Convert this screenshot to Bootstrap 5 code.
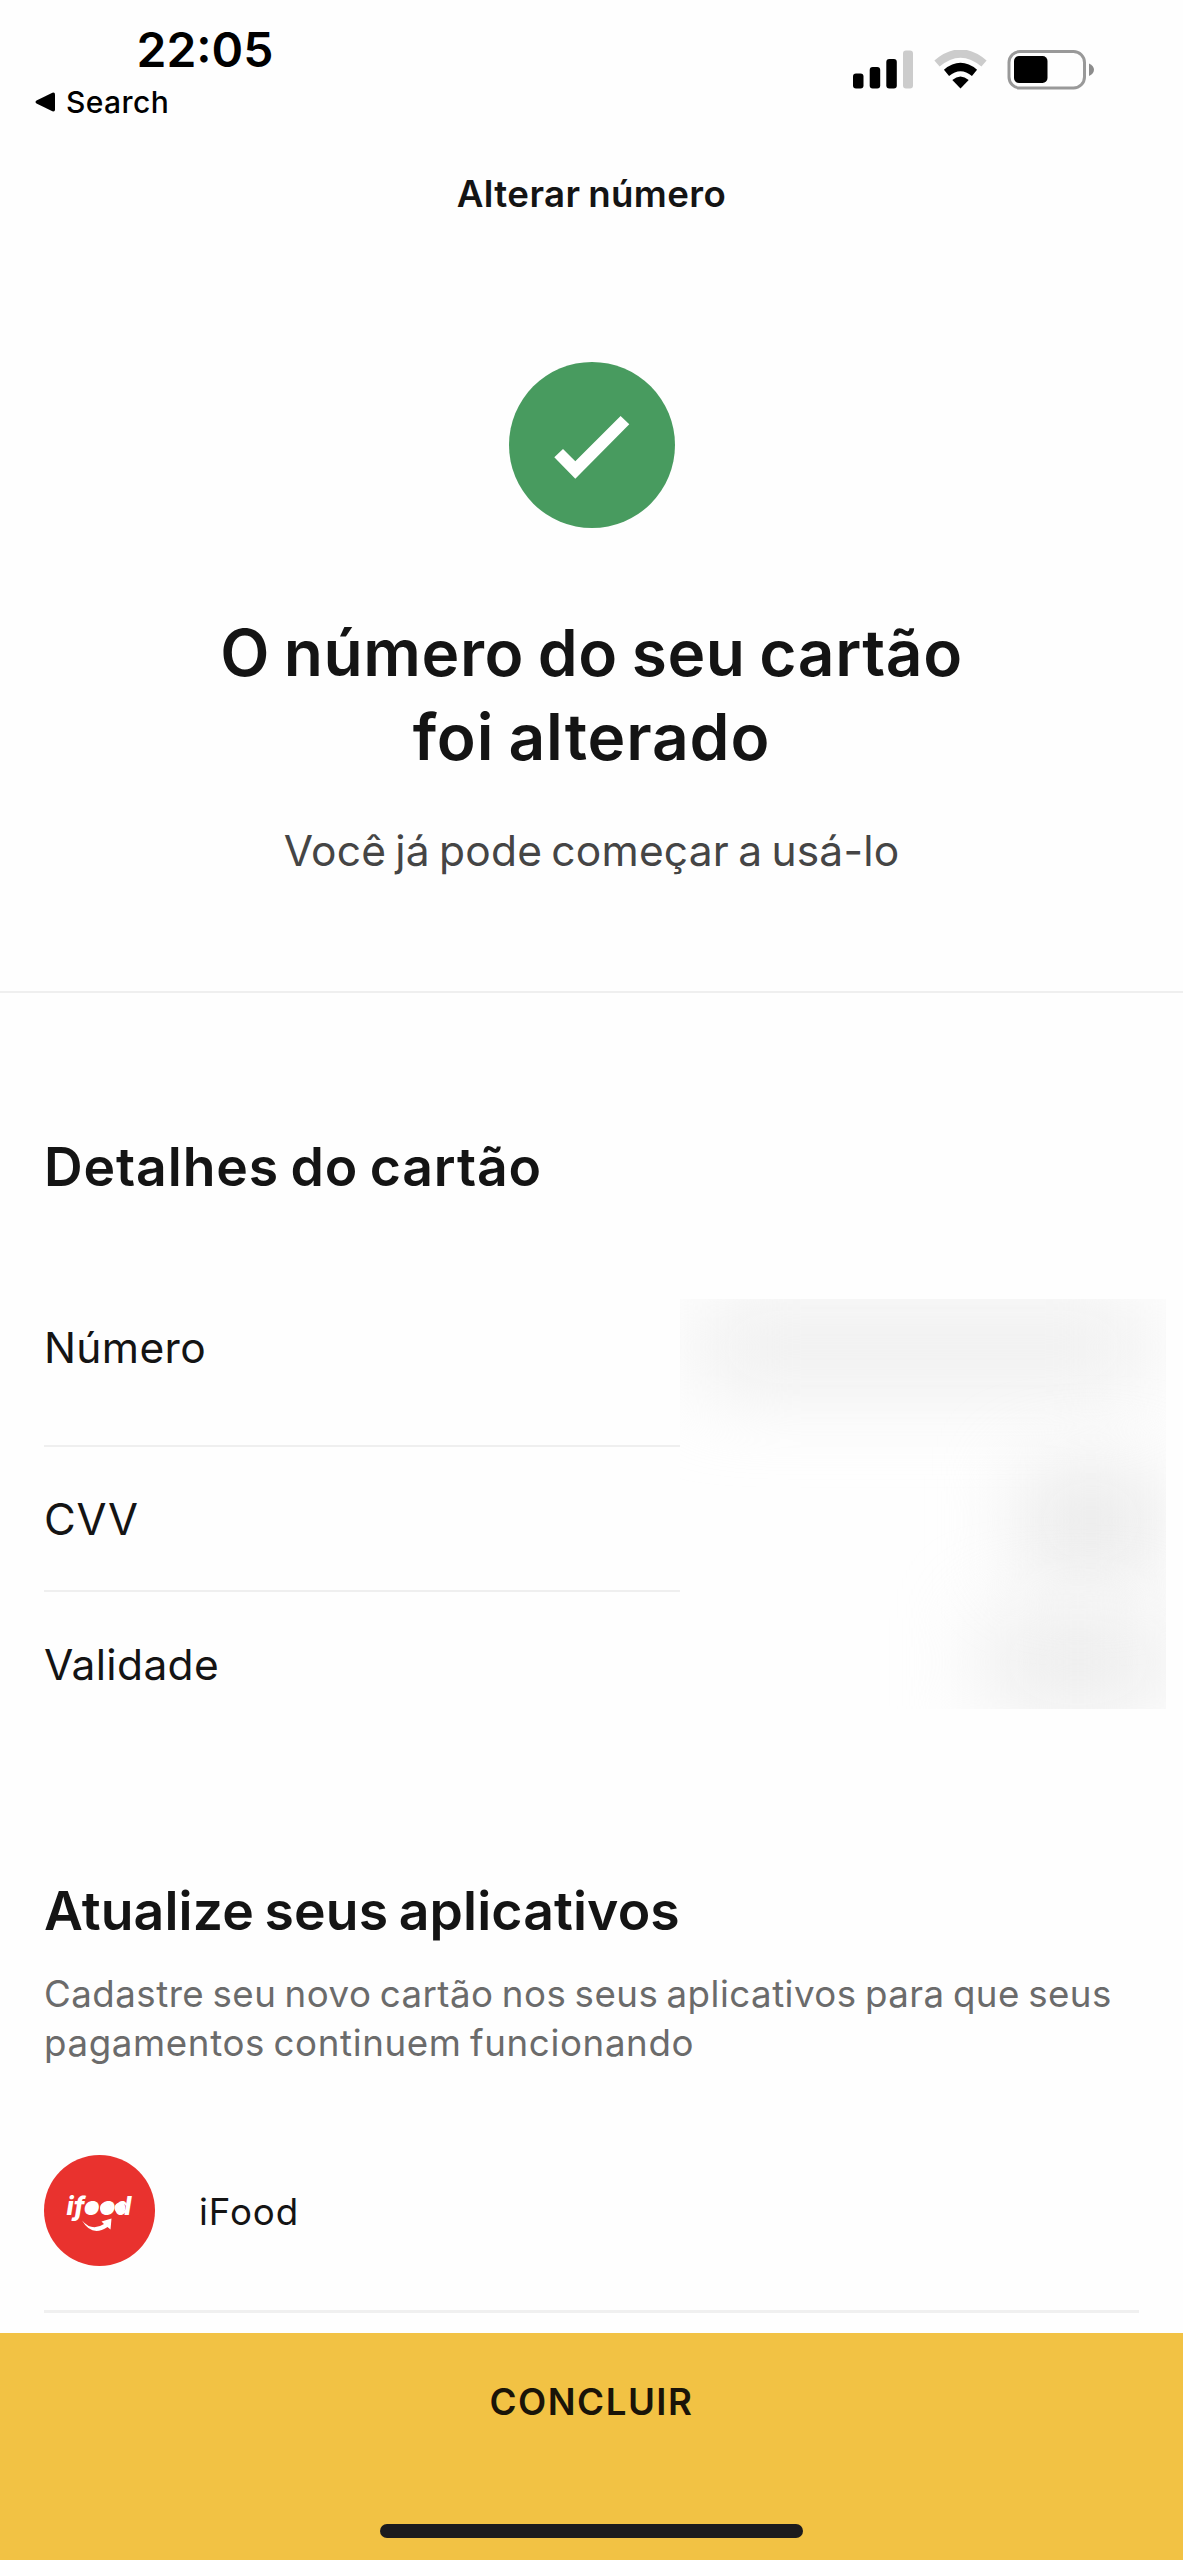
<!DOCTYPE html>
<html lang="pt-BR">
<head>
<meta charset="utf-8">
<meta name="viewport" content="width=device-width, initial-scale=1">
<title>Alterar número</title>
<link href="https://cdn.jsdelivr.net/npm/bootstrap@5.3.0/dist/css/bootstrap.min.css" rel="stylesheet">
<style>
  body { font-family: Inter, "Liberation Sans", sans-serif; color: #141414; background: #fefefe; }
  .screen { height: 2560px; }
  .gutter { padding-left: 44px; padding-right: 44px; }

  /* Status bar */
  .status-bar { height: 143.6px; }
  .clock { padding: 21px 0 0 136.5px; font-size: 48px; line-height: 57px; font-weight: 600; color: #000; }
  .back-link { margin-top: 4px; padding-left: 35px; gap: 10px; font-size: 30px; line-height: 40px; font-weight: 500; letter-spacing: .4px; color: #000; }
  .status-icons { padding: 50px 88px 0 0; }
  .icon-signal { margin-right: 20.5px; }
  .icon-wifi { margin-right: 20px; }

  .nav-title { height: 100px; font-size: 36.7px; font-weight: 600; letter-spacing: .4px; word-spacing: -2px; }

  /* Confirmation */
  .hero { padding: 118px 0 112px; border-bottom: 2px solid #efefef; }
  .hero-title { margin: 83px 0 0; font-size: 64px; line-height: 84px; font-weight: 600; letter-spacing: .6px; word-spacing: -3px; }
  .hero-title .second { letter-spacing: .9px; }
  .hero-sub { margin: 44.5px 0 0; font-size: 42.5px; line-height: 56px; letter-spacing: .2px; word-spacing: -3px; color: #454545; }

  .section-title { margin: 137.5px 0 0; font-size: 53.5px; line-height: 72px; font-weight: 600; word-spacing: -3px; }
  .title-card { letter-spacing: .9px; }
  .title-apps { letter-spacing: .12px; }

  /* Card data */
  .detail-list { margin-top: 100px; }
  .detail-row { height: 145px; border-bottom: 2px solid #efefef; font-size: 42.5px; line-height: 90px; letter-spacing: .35px; }
  .detail-row:first-child { height: 144.5px; }
  .detail-row:last-child { border-bottom: 0; }
  .spaced { font-size: 43.5px; letter-spacing: .8px; }
  .redacted { left: 680px; top: -4px; width: 486px; height: 410px; background: #fefefe; overflow: hidden; }

  .section-note { margin: 22.5px 0 0; font-size: 36.7px; line-height: 49px; color: #6b6b6b; letter-spacing: .47px; word-spacing: -2.5px; }
  .section-note .second { letter-spacing: .63px; }

  .app-row { margin-top: 88px; padding-bottom: 44px; gap: 44px; border-bottom: 3px solid #f0f0f0; font-size: 36.7px; letter-spacing: .9px; }
  .app-row span { padding-top: 2px; }

  /* Bottom action */
  .action-bar { height: 227px; background: #f2c244; padding: 43.5px 0 22px; }
  .action-btn { font-size: 36.7px; line-height: 50px; font-weight: 600; letter-spacing: 1.5px; color: #1a1408; background: none; }
  .home-indicator { width: 423px; height: 14px; background: #1c1b1d; }
</style>
<script src="https://cdn.jsdelivr.net/npm/bootstrap@5.3.0/dist/js/bootstrap.bundle.min.js"></script>
</head>
<body>
<div class="screen position-relative overflow-hidden d-flex flex-column">

  <div class="status-bar d-flex justify-content-between align-items-start">
    <div class="d-flex flex-column">
      <div class="clock">22:05</div>
      <div class="back-link d-flex align-items-center">
        <svg width="21" height="20" viewBox="0 0 21 20"><path d="M1.5 8.6 17.4.7Q20 0 20 2.4V17.6Q20 20 17.4 19.300L1.500 11.400Q-.5 10 1.500 8.600Z" fill="#000"/></svg>
        <span>Search</span>
      </div>
    </div>
    <div class="status-icons d-flex align-items-start">
      <svg class="icon-signal" width="61" height="39" viewBox="0 0 61 39">
        <rect x="0" y="23.500" width="10.500" height="15" rx="3"/>
        <rect x="16.700" y="17" width="10.500" height="21.500" rx="3"/>
        <rect x="33.300" y="9" width="10.500" height="29.500" rx="3"/>
        <rect x="50" y="0.500" width="10" height="38" rx="3" fill="#ccc"/>
      </svg>
      <svg class="icon-wifi" width="53" height="39" viewBox="0 0 53 39">
        <path d="M3 13.500Q26.500-6.500 50 13.500" fill="none" stroke="#ccc" stroke-width="8"/>
        <path d="M12.500 22.800Q26.500 11.200 40.500 22.800" fill="none" stroke="#000" stroke-width="8"/>
        <path d="M18.300 30Q26.500 22.800 34.700 30L26.500 38.500Z"/>
      </svg>
      <svg width="88" height="40" viewBox="0 0 88 40">
        <rect x="2" y="1.500" width="75.500" height="36.500" rx="11" fill="none" stroke="#999" stroke-width="3"/>
        <rect x="7" y="6" width="33.500" height="27" rx="5"/>
        <path d="M82 13.500Q87 16 87 19.700T82 26Z" fill="#8c8c8c"/>
      </svg>
    </div>
  </div>

  <header class="nav-title d-flex align-items-center justify-content-center">Alterar número</header>

  <section class="hero text-center d-flex flex-column align-items-center">
    <svg width="166" height="166" viewBox="0 0 166 166">
      <circle cx="83" cy="83" r="83" fill="#489b5f"/>
      <path d="M45.300 95.300 54 87 66.300 99.300 111.600 54 120.300 62.300 66.300 116.700Z" fill="#fff"/>
    </svg>
    <h1 class="hero-title">O número do seu cartão<br><span class="second">foi alterado</span></h1>
    <p class="hero-sub">Você já pode começar a usá-lo</p>
  </section>

  <section class="gutter">
    <h2 class="section-title title-card">Detalhes do cartão</h2>
  </section>
  <div class="detail-list position-relative">
    <div class="gutter">
      <div class="detail-row">Número</div>
      <div class="detail-row d-flex align-items-center"><span class="spaced">CVV</span></div>
      <div class="detail-row d-flex align-items-center">Validade</div>
    </div>
    <div class="redacted position-absolute">
      <svg class="d-block" width="486" height="410" viewBox="0 0 486 410">
        <defs><filter id="soft" x="-150%" y="-200%" width="400%" height="500%" color-interpolation-filters="sRGB"><feGaussianBlur stdDeviation="42"/></filter></defs>
        <g fill="#ececec">
          <rect x="20" y="8" width="446" height="80" filter="url(#soft)"/>
          <rect x="345" y="176" width="132" height="92" filter="url(#soft)" fill="#e6e6e6"/>
          <rect x="310" y="318" width="176" height="90" filter="url(#soft)" fill="#eaeaea"/>
        </g>
      </svg>
    </div>
  </div>

  <section class="gutter">
    <h2 class="section-title title-apps">Atualize seus aplicativos</h2>
    <p class="section-note text-nowrap">Cadastre seu novo cartão nos seus aplicativos para que seus<br><span class="second">pagamentos continuem funcionando</span></p>
    <div class="app-row d-flex align-items-center">
      <svg width="111" height="111" viewBox="0 0 111 111">
        <circle cx="55.500" cy="55.500" r="55.500" fill="#e9322e"/>
        <text x="22.500" y="60" font-family="Inter, sans-serif" font-size="26" font-weight="800" font-style="italic" letter-spacing="0" textLength="65" lengthAdjust="spacingAndGlyphs" fill="#fff">ifood</text>
        <g fill="#fff">
          <circle cx="47" cy="53" r="5.500"/><circle cx="61.500" cy="53" r="5.500"/><circle cx="76" cy="53" r="5.500"/>
          <path d="M38 65.500Q48 77 60 69L57.500 66.500 67.500 63.500 66.500 74.500 63.500 72Q48 82.500 38 65.500Z"/>
        </g>
      </svg>
      <span>iFood</span>
    </div>
  </section>

  <footer class="action-bar position-absolute bottom-0 start-0 w-100 d-flex flex-column align-items-center justify-content-between">
    <button type="button" class="action-btn border-0 p-0">CONCLUIR</button>
    <div class="home-indicator rounded-pill"></div>
  </footer>
</div>
</body>
</html>
